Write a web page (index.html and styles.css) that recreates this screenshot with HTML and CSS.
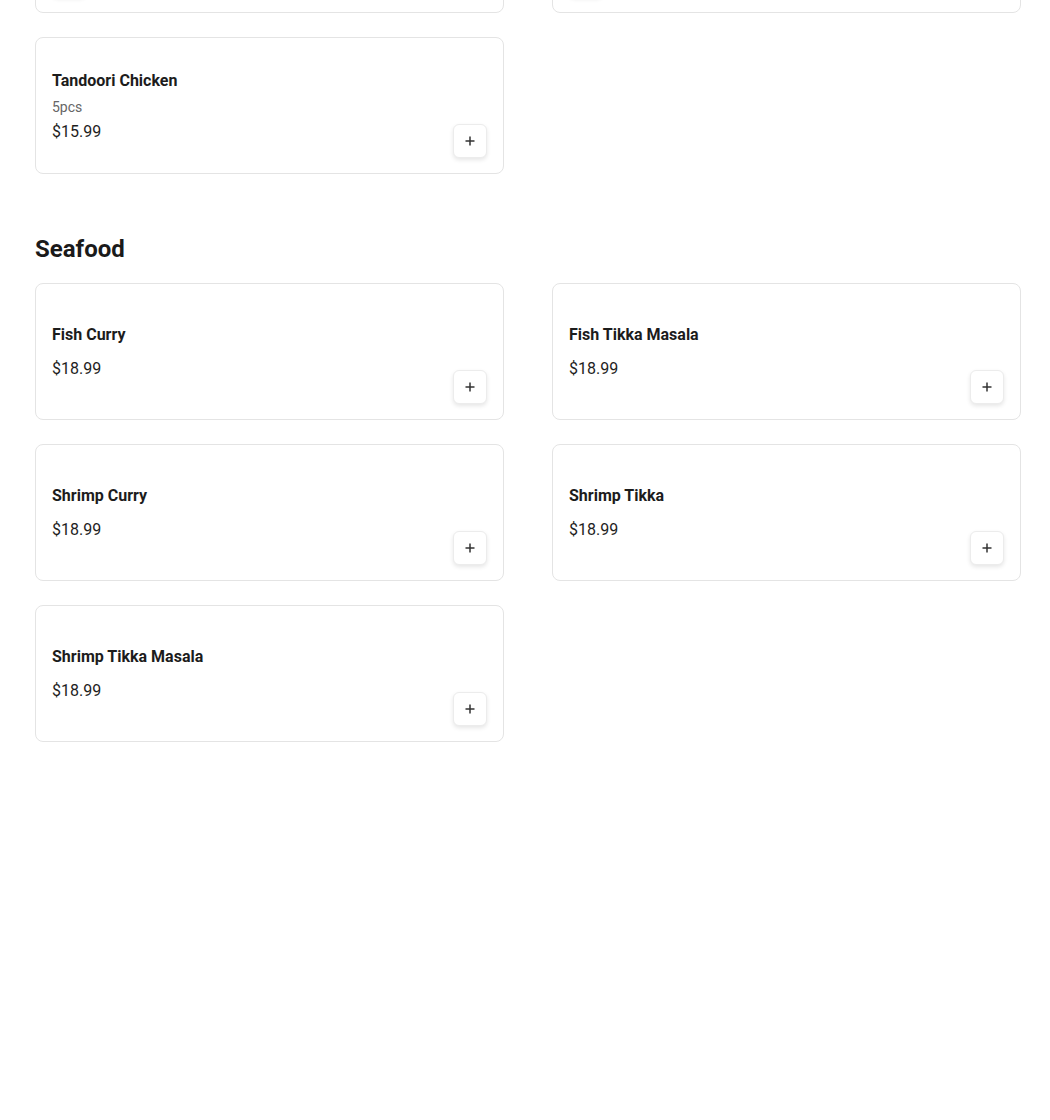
FILE: index.html
```html
<!DOCTYPE html>
<html lang="en">
<head>
<meta charset="utf-8">
<title>Menu</title>
<link rel="stylesheet" href="styles.css">
</head>
<body>
<main class="menu">
  <div class="clip">
    <div class="grid grid-clipped">
      <div class="card card-tall"><button class="add" aria-label="Add"><svg viewBox="0 0 12 12" width="12" height="12"><path d="M6 1.5v9M1.5 6h9" stroke="#333" stroke-width="1.5" fill="none"/></svg></button></div>
      <div class="card card-tall"><button class="add" aria-label="Add"><svg viewBox="0 0 12 12" width="12" height="12"><path d="M6 1.5v9M1.5 6h9" stroke="#333" stroke-width="1.5" fill="none"/></svg></button></div>
    </div>
  </div>
  <div class="grid grid-after-clip">
    <div class="card">
      <div class="info info-desc">
        <div class="name">Tandoori Chicken</div>
        <div class="desc">5pcs</div>
        <div class="price">$15.99</div>
      </div>
      <button class="add" aria-label="Add"><svg viewBox="0 0 12 12" width="12" height="12"><path d="M6 1.5v9M1.5 6h9" stroke="#333" stroke-width="1.5" fill="none"/></svg></button>
    </div>
  </div>

  <section class="section">
    <h2 class="section-title">Seafood</h2>
    <div class="grid">
      <div class="card">
        <div class="info">
          <div class="name">Fish Curry</div>
          <div class="price">$18.99</div>
        </div>
        <button class="add" aria-label="Add"><svg viewBox="0 0 12 12" width="12" height="12"><path d="M6 1.5v9M1.5 6h9" stroke="#333" stroke-width="1.5" fill="none"/></svg></button>
      </div>
      <div class="card">
        <div class="info">
          <div class="name">Fish Tikka Masala</div>
          <div class="price">$18.99</div>
        </div>
        <button class="add" aria-label="Add"><svg viewBox="0 0 12 12" width="12" height="12"><path d="M6 1.5v9M1.5 6h9" stroke="#333" stroke-width="1.5" fill="none"/></svg></button>
      </div>
      <div class="card">
        <div class="info">
          <div class="name">Shrimp Curry</div>
          <div class="price">$18.99</div>
        </div>
        <button class="add" aria-label="Add"><svg viewBox="0 0 12 12" width="12" height="12"><path d="M6 1.5v9M1.5 6h9" stroke="#333" stroke-width="1.5" fill="none"/></svg></button>
      </div>
      <div class="card">
        <div class="info">
          <div class="name">Shrimp Tikka</div>
          <div class="price">$18.99</div>
        </div>
        <button class="add" aria-label="Add"><svg viewBox="0 0 12 12" width="12" height="12"><path d="M6 1.5v9M1.5 6h9" stroke="#333" stroke-width="1.5" fill="none"/></svg></button>
      </div>
      <div class="card">
        <div class="info">
          <div class="name">Shrimp Tikka Masala</div>
          <div class="price">$18.99</div>
        </div>
        <button class="add" aria-label="Add"><svg viewBox="0 0 12 12" width="12" height="12"><path d="M6 1.5v9M1.5 6h9" stroke="#333" stroke-width="1.5" fill="none"/></svg></button>
      </div>
    </div>
  </section>
</main>
</body>
</html>
```

FILE: styles.css
```css
* { box-sizing: border-box; }

html, body {
  margin: 0;
  padding: 0;
  background: #ffffff;
}

body {
  font-family: Roboto, "Liberation Sans", Arial, sans-serif;
  color: #1a1a1a;
}

.menu {
  width: 986px;
  margin-left: 35px;
}

.clip {
  height: 13px;
  overflow: hidden;
  display: flex;
  flex-direction: column;
  justify-content: flex-end;
}

.grid {
  display: grid;
  grid-template-columns: 469px 469px;
  column-gap: 48px;
  row-gap: 24px;
}

.grid-clipped {
  flex-shrink: 0;
}

.grid-after-clip {
  margin-top: 24px;
}

.card {
  border: 1px solid #e4e4e4;
  border-radius: 8px;
  background: #fff;
  min-height: 137px;
  padding: 16px;
  display: flex;
  align-items: center;
  justify-content: space-between;
}

.card-tall {
  align-items: flex-end;
}

.info {
  display: flex;
  flex-direction: column;
}

.info-desc {
  padding-top: 2px;
}

.name {
  font-size: 16px;
  font-weight: 700;
  line-height: 20px;
  color: #1c1c1c;
}

.desc {
  font-size: 14px;
  line-height: 20px;
  color: #666;
  margin-top: 6px;
}

.price {
  font-size: 16px;
  line-height: 20px;
  color: #1e1e1e;
  margin-top: 14px;
}

.desc + .price {
  margin-top: 5px;
}

.add {
  align-self: flex-end;
  width: 34px;
  height: 34px;
  margin-bottom: -1px;
  border: 1px solid #ececec;
  border-radius: 6px;
  background: #fff;
  box-shadow: 0 2px 4px rgba(0, 0, 0, 0.1);
  display: flex;
  align-items: center;
  justify-content: center;
  padding: 0;
  cursor: pointer;
}

.add svg { display: block; }

.section {
  margin-top: 59px;
}

.section-title {
  font-size: 24px;
  font-weight: 700;
  line-height: 32px;
  margin: 0 0 18px;
  color: #1a1a1a;
}
```
